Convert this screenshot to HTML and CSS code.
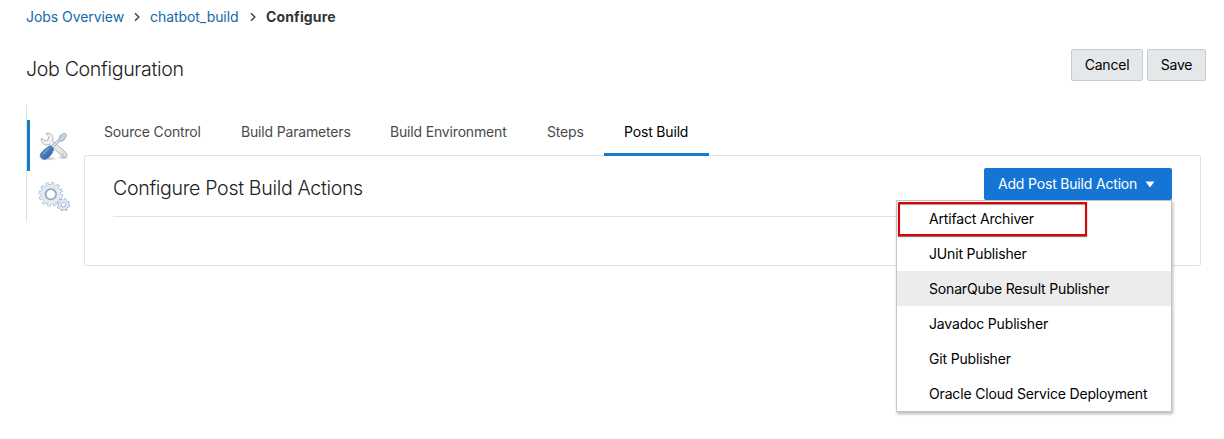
FILE: index.html
```html
<!DOCTYPE html>
<html lang="en">
<head>
<meta charset="utf-8">
<title>Job Configuration</title>
<link rel="stylesheet" href="styles.css">
</head>
<body>
<nav class="crumbs">
  <a class="crumb-jobs">Jobs Overview</a>
  <svg class="chevron" width="6" height="10" viewBox="0 0 6 10"><path d="M1 1.2 4.8 5 1 8.8"/></svg>
  <a class="crumb-build">chatbot_build</a>
  <svg class="chevron" width="6" height="10" viewBox="0 0 6 10"><path d="M1 1.2 4.8 5 1 8.8"/></svg>
  <strong class="crumb-current">Configure</strong>
</nav>
<header class="heading">
  <h1 class="title">Job Configuration</h1>
  <div class="actions">
    <button class="btn cancel">Cancel</button>
    <button class="btn save">Save</button>
  </div>
</header>
<main class="main">
  <aside class="side">
    <div class="side-item active">
      <svg width="32" height="32" viewBox="0 0 32 32">
        <defs>
          <linearGradient id="steel" x1="0" y1="0" x2="1" y2="1"><stop offset="0" stop-color="#fafafa"/><stop offset="1" stop-color="#dedede"/></linearGradient>
          <linearGradient id="handle" x1="0" y1="0" x2="1" y2="1"><stop offset="0" stop-color="#81abdc"/><stop offset=".5" stop-color="#4279bd"/><stop offset="1" stop-color="#2c5aa0"/></linearGradient>
          <radialGradient id="shade"><stop offset="0" stop-color="#777" stop-opacity=".5"/><stop offset="1" stop-color="#777" stop-opacity="0"/></radialGradient>
        </defs>
        <ellipse cx="10" cy="28.600" rx="10" ry="2.2" fill="url(#shade)"/>
        <ellipse cx="25" cy="27.500" rx="6" ry="2" fill="url(#shade)"/>
        <path d="M8 3.400c4-1.200 7.300 1.700 6.900 5.700l-.3 1.900L27.900 22.600c2.700 2.500.2 6-3.200 4.200L11.500 14.300c-4.700 2-9.200-1.200-8.100-6.200l3.500 2.700 3.100-.9.800-3.300z" fill="url(#steel)" stroke="#aaa" stroke-width=".9"/>
        <path d="M24 23.800l2 1.500" stroke="#aaa"/>
        <path d="M14 17.400 22.400 9" stroke="#98a4b8" stroke-width="3"/>
        <path d="M14 17.400 22.400 9" stroke="#e0e6ef" stroke-width="1.600"/>
        <path d="m21 9.800.8-4 3.600-2.500c1.600-.7 3.500.9 3 2.600l-2.400 4.200-3.100 1.600z" fill="#c5d0e2" stroke="#96a4bd" stroke-width=".8"/>
        <path d="M11 16.200c1.600-1 5.100 1.900 4.400 3.900-1.700 4.300-4 7.300-7.500 8.900-3.400 1.200-6.600-1.900-5.400-4.900C4.200 20.900 7.700 18.700 11 16.200z" fill="url(#handle)" stroke="#4472b4" stroke-width=".9"/>
        <path d="m5 24.200 6.300-6" stroke="#8db4e2" stroke-width="1"/>
      </svg>
    </div>
    <div class="side-item">
      <svg width="32" height="32" viewBox="0 0 32 32">
        <g fill="none">
          <circle cx="12.800" cy="13.300" r="10.500" stroke="#a3b5c9" stroke-width="3.600" stroke-dasharray="3.100 2.398"/>
          <circle cx="12.800" cy="13.300" r="7.300" stroke="#a3b5c9" stroke-width="6"/>
          <circle cx="12.800" cy="13.300" r="10.200" stroke="#e8eff8" stroke-width="2.800" stroke-dasharray="2 3.341" stroke-dashoffset="-.5"/>
          <circle cx="12.800" cy="13.300" r="7.400" stroke="#e2eaf4" stroke-width="4.900"/>
          <circle cx="12.800" cy="13.300" r="5.400" stroke="#94a3b6" stroke-width="1.300"/>
          <circle cx="25.300" cy="23.700" r="5.100" stroke="#91a6bf" stroke-width="2.800" stroke-dasharray="2.200 1.805"/>
          <circle cx="25.300" cy="23.700" r="3.600" stroke="#91a6bf" stroke-width="3.400"/>
          <circle cx="25.300" cy="23.700" r="4.900" stroke="#dce7f4" stroke-width="1.800" stroke-dasharray="1.300 2.548" stroke-dashoffset="-.4"/>
          <circle cx="25.300" cy="23.700" r="3.700" stroke="#dfe9f5" stroke-width="2.300"/>
        </g>
      </svg>
    </div>
  </aside>
  <section class="content">
    <div class="tabs">
      <span class="tab t-source">Source Control</span>
      <span class="tab t-params">Build Parameters</span>
      <span class="tab t-env">Build Environment</span>
      <span class="tab t-steps">Steps</span>
      <span class="tab selected">Post Build</span>
    </div>
    <div class="panel">
      <div class="panel-head">
        <h2 class="title panel-title">Configure Post Build Actions</h2>
        <div class="dropdown">
          <button class="add">Add Post Build Action<svg width="10" height="7" viewBox="0 0 10 7"><path d="M.5.5h9L5 6.500z" fill="#fff"/></svg></button>
          <ul class="menu">
            <li class="option marked">Artifact Archiver</li>
            <li class="option">JUnit Publisher</li>
            <li class="option hover">SonarQube Result Publisher</li>
            <li class="option">Javadoc Publisher</li>
            <li class="option">Git Publisher</li>
            <li class="option">Oracle Cloud Service Deployment</li>
          </ul>
        </div>
      </div>
    </div>
  </section>
</main>
</body>
</html>
```
FILE: styles.css
```css
*, *::after { box-sizing: border-box; }
body {
  margin: 0;
  padding: 7px 18px 0 26px;
  height: 439px;
  background: #fff;
  color: #333;
  font: 14px/20px Inter, "Liberation Sans", sans-serif;
  letter-spacing: -.17px;
}
.crumbs { display: flex; align-items: center; height: 20px; white-space: nowrap; }
.crumbs a { color: #1269a8; letter-spacing: -.06px; }
.crumb-jobs { width: 98px; }
.crumb-build { width: 90px; }
.chevron { margin: 0 10px; fill: none; stroke: #444; stroke-width: 1.5; }
.crumb-current { font-weight: 700; letter-spacing: .14px; }
.heading { display: flex; justify-content: space-between; margin-top: 22px; height: 56px; }
.title { margin: 0; font-size: 19.6px; line-height: 24px; font-weight: 300; color: #222; letter-spacing: -.34px; }
.heading .title { padding-top: 8px; }
.actions { display: flex; gap: 4px; }
.btn {
  height: 32px;
  padding: 0;
  border: 1px solid #c4ced7;
  border-radius: 2px;
  background: #e4e8ea;
  color: #000;
  font: inherit;
  letter-spacing: -.2px;
}
.cancel { width: 72px; }
.save { width: 59px; }
.main { display: flex; }
.side { width: 58px; height: 117px; padding-top: 15px; border-left: 1px solid #dfe1e3; }
.side-item { height: 51px; padding: 10px 0 0 8px; border-left: 3px solid transparent; }
.side-item svg { display: block; fill: none; }
.side-item.active { border-left-color: #167dc9; }
.content { width: 1117px; }
.tabs { display: flex; height: 51px; }
.tab { padding: 17px 20px 0; height: 51px; color: #4a4a4a; white-space: nowrap; }
.selected { width: 105px; border-bottom: 3px solid #1a7bc8; color: #000; position: relative; z-index: 1; }
.t-source { width: 137px; }
.t-params { width: 149px; }
.t-env { width: 157px; }
.t-steps { width: 77px; }
.panel { height: 111px; margin-top: -1px; padding: 12px 28px 0; border: 1px solid #dfe1e3; border-radius: 2px; }
.panel-head { display: flex; justify-content: space-between; height: 49px; border-bottom: 1px solid #dfe1e3; }
.panel-title { padding-top: 8px; }
.dropdown { position: relative; width: 188px; height: 32px; }
.add {
  display: flex;
  align-items: center;
  width: 188px;
  height: 32px;
  padding: 0 0 0 14px;
  border: 0;
  border-radius: 2px;
  background: #1475d4;
  color: #fff;
  font: inherit;
  letter-spacing: -.18px;
  white-space: nowrap;
}
.add svg { margin-left: 8px; margin-top: 1px; }
.menu {
  position: absolute;
  z-index: 2;
  top: 32px;
  right: 0;
  width: 276px;
  margin: 0;
  padding: 0;
  border: 1px solid #c4c4c4;
  background: #fff;
  box-shadow: 1px 2px 3px rgba(0, 0, 0, .28);
  list-style: none;
}
.option { position: relative; height: 35px; padding: 8px 0 0 32px; color: #000; white-space: nowrap; }
.hover { background: #ececec; }
.marked::after {
  content: "";
  position: absolute;
  left: 1px;
  top: 1px;
  width: 189px;
  height: 34px;
  border: 2px solid #e00000;
  box-shadow: 0 1px 1px rgba(0, 0, 0, .5), inset 0 1px 1px rgba(0, 0, 0, .4);
}
```
